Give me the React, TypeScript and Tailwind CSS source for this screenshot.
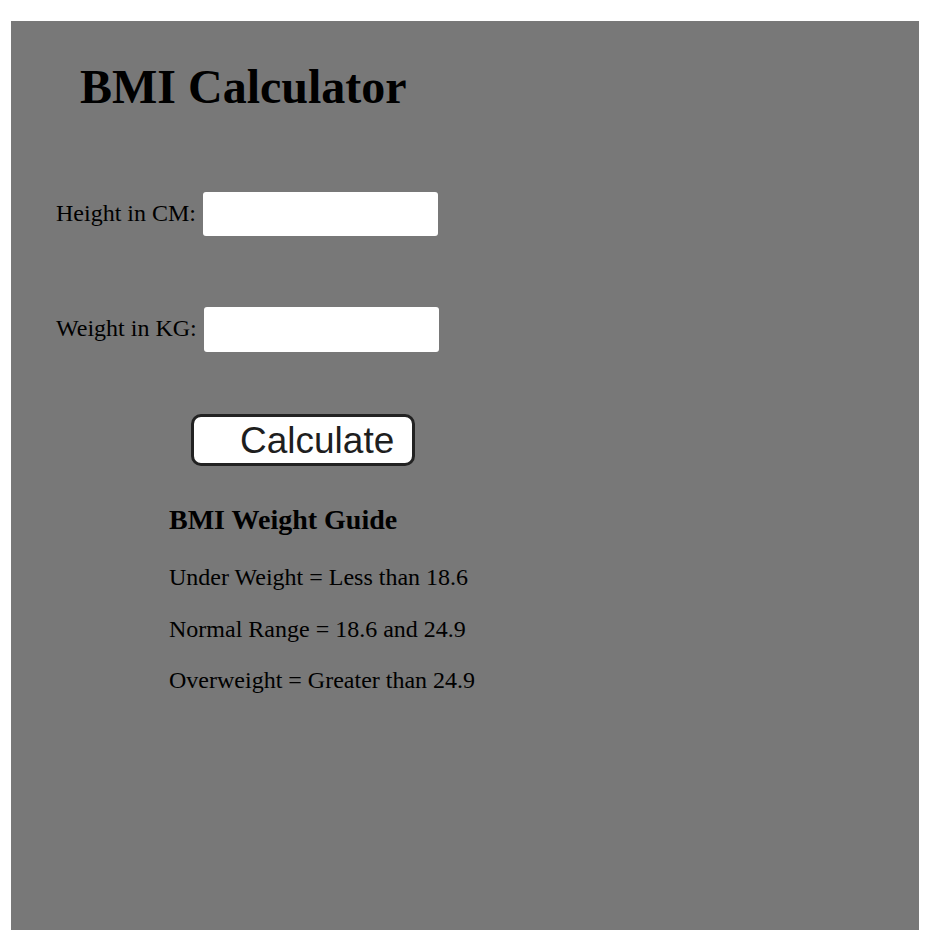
import React from "react";

export default function App() {
  return (
    <div className="bg-white w-[928px] pt-[21px] pl-[11px] pr-[9px]" style={{ fontFamily: '"Liberation Serif", "Times New Roman", serif' }}>
      <div className="bg-[#787878] w-[908px] h-[909px] pt-[38px] text-black">
        <h1 className="ml-[69px] text-[48px] leading-[56px] font-bold">BMI Calculator</h1>

        <div className="mt-[77px] ml-[45px] flex items-start">
          <label className="mt-[7px] text-[24px] leading-[28px]">Height in CM:</label>
          <input type="text" className="ml-[7px] w-[235px] h-[44px] bg-white rounded-[3px] border-0 outline-none" />
        </div>

        <div className="mt-[71px] ml-[45px] flex items-start">
          <label className="mt-[7px] text-[24px] leading-[28px]">Weight in KG:</label>
          <input type="text" className="ml-[7px] w-[235px] h-[45px] bg-white rounded-[3px] border-0 outline-none" />
        </div>

        <button
          type="button"
          className="mt-[62px] ml-[180px] w-[224px] h-[52px] flex items-center pl-[46px] pt-[1px] bg-white border-[3px] border-[#222222] rounded-[10px] text-[37px] leading-[42px] text-[#1e1e1e]"
          style={{ fontFamily: '"Liberation Sans", Arial, sans-serif' }}
        >
          Calculate
        </button>

        <div className="ml-[158px]">
          <h3 className="mt-[38px] text-[28px] leading-[32px] font-bold">BMI Weight Guide</h3>
          <p className="mt-[27px] text-[24px] leading-[28px]">Under Weight = Less than 18.6</p>
          <p className="mt-[23.5px] text-[24px] leading-[28px]">Normal Range = 18.6 and 24.9</p>
          <p className="mt-[23.5px] text-[24px] leading-[28px]">Overweight = Greater than 24.9</p>
        </div>
      </div>
    </div>
  );
}
